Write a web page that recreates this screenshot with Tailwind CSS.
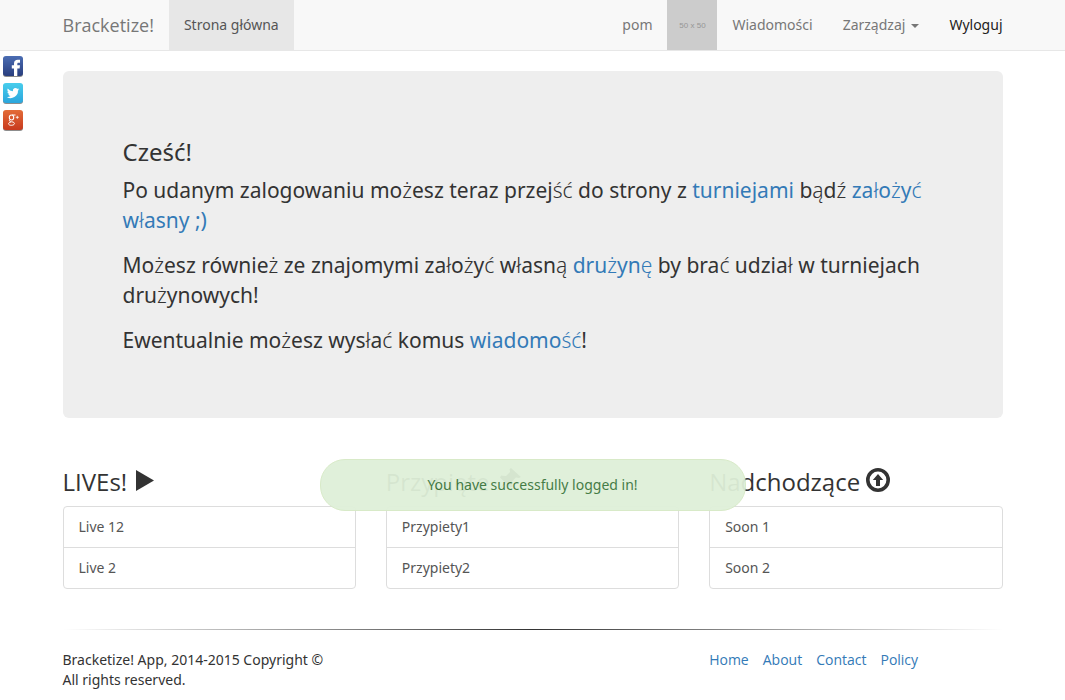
<!DOCTYPE html>
<html lang="pl">
<head>
<meta charset="utf-8">
<meta name="viewport" content="width=device-width, initial-scale=1">
<title>Bracketize!</title>
<script src="https://cdn.jsdelivr.net/npm/@tailwindcss/browser@4"></script>
</head>
<body class="bg-white font-['Noto_Sans','Open_Sans',sans-serif] text-[14px] leading-5 text-[#333]">
<nav class="mb-5 border-b border-[#e7e7e7] bg-[#f8f8f8] text-[#777]">
  <div class="mx-auto flex max-w-[970px] flex-wrap items-stretch justify-between px-[15px]">
    <div class="flex">
      <a href="#" class="py-[15px] pr-[15px] font-['Open_Sans',sans-serif] text-[18px]">Bracketize!</a>
      <a href="#" class="bg-[#e7e7e7] p-[15px] text-[#555]">Strona główna</a>
    </div>
    <div class="flex">
      <a href="#" class="p-[15px]">pom</a>
      <a href="#" class="flex w-[50px] items-center justify-center bg-[#ccc] pt-0.5 font-['Liberation_Sans_Narrow','Liberation_Sans',sans-serif] text-[8px] text-[#969696]">50 x 50</a>
      <a href="#" class="p-[15px]">Wiadomości</a>
      <button type="button" class="flex items-center gap-1.5 p-[15px]">Zarządzaj<span class="mt-0.5 border-x-4 border-t-4 border-x-transparent border-t-[#777]"></span></button>
      <a href="#" class="py-[15px] pl-[15px] text-[#222]">Wyloguj</a>
    </div>
  </div>
</nav>

<aside class="fixed top-14 left-[3px] flex flex-col gap-1.5">
  <a href="#" aria-label="Facebook"><svg class="block" width="20" height="21" viewBox="0 0 20 21"><defs><linearGradient id="fb" x2="0" y2="1"><stop stop-color="#4b6db3"/><stop offset="1" stop-color="#293e7e"/></linearGradient></defs><rect y="1" width="20" height="20" rx="3" fill="#8d8d8d"/><rect width="20" height="20" rx="3" fill="url(#fb)"/><path d="M11 20v-7.600H8.800V9.300H11V7.500C11 5 12.500 3.800 14.700 3.800H17v3h-1.400c-1 0-1.300.4-1.300 1.300v1.200H17l-.4 3.100h-2.300V20z" fill="#fff"/></svg></a>
  <a href="#" aria-label="Twitter"><svg class="block" width="20" height="21" viewBox="0 0 20 21"><defs><linearGradient id="tw" x2="0" y2="1"><stop stop-color="#48cdec"/><stop offset="1" stop-color="#2ba6dd"/></linearGradient></defs><rect y="1" width="20" height="20" rx="3" fill="#8d8d8d"/><rect width="20" height="20" rx="3" fill="url(#tw)"/><path transform="translate(3.800 3.800) scale(.52)" d="M24 4.600a10 10 0 0 1-2.800.8 5 5 0 0 0 2.100-2.700 10 10 0 0 1-3.100 1.200 4.900 4.900 0 0 0-8.400 4.500A14 14 0 0 1 1.700 3.200a4.900 4.900 0 0 0 1.500 6.500 5 5 0 0 1-2.200-.6 4.900 4.900 0 0 0 3.900 4.900 5 5 0 0 1-2.200.1 4.900 4.900 0 0 0 4.600 3.400A10 10 0 0 1 0 19.500a14 14 0 0 0 21.500-12.400A10 10 0 0 0 24 4.600z" fill="#fff"/></svg></a>
  <a href="#" aria-label="Google+"><svg class="block" width="20" height="21" viewBox="0 0 20 21"><defs><linearGradient id="gp" x2="0" y2="1"><stop stop-color="#e36c38"/><stop offset="1" stop-color="#c83a1e"/></linearGradient></defs><rect y="1" width="20" height="20" rx="3" fill="#8d8d8d"/><rect width="20" height="20" rx="3" fill="url(#gp)"/><g fill="none" stroke="#fff"><ellipse cx="8.500" cy="7.500" rx="2.200" ry="2.500" stroke-width="1.100"/><path d="M9 5h3.500M7 10c-1.600 1 .2 1.600 1.800 1.800 2 .3 2.800 1 2.600 2-.5 2-5.800 2-5.800 0 0-1 1-1.600 2.600-1.800" stroke-width="1"/><path d="M14.300 5.800v3M12.800 7.300h3" stroke-width=".8"/></g></svg></a>
</aside>

<div class="mx-auto max-w-[970px] px-[15px]">
  <main>
    <section class="mb-[30px] rounded-md bg-[#eee] px-[60px] py-12 text-[21px] leading-[30px]">
      <h3 class="mt-5 mb-2.5 text-[24px] leading-[26px]">Cześć!</h3>
      <p class="mb-[15px]">Po udanym zalogowaniu mo<span class="font-light">ż</span>esz teraz przej<span class="font-light">ść</span> do strony z <a href="#" class="text-[#337ab7]">turniejami</a> b<span class="font-light">ą</span>d<span class="font-light">ź</span> <a href="#" class="text-[#337ab7]">za<span class="font-light">ł</span>o<span class="font-light">ż</span>y<span class="font-light">ć</span> w<span class="font-light">ł</span>asny ;)</a></p>
      <p class="mb-[15px]">Mo<span class="font-light">ż</span>esz równie<span class="font-light">ż</span> ze znajomymi za<span class="font-light">ł</span>o<span class="font-light">ż</span>y<span class="font-light">ć</span> w<span class="font-light">ł</span>asn<span class="font-light">ą</span> <a href="#" class="text-[#337ab7]">dru<span class="font-light">ż</span>yn<span class="font-light">ę</span></a> by bra<span class="font-light">ć</span> udzia<span class="font-light">ł</span> w turniejach dru<span class="font-light">ż</span>ynowych!</p>
      <p class="mb-[15px]">Ewentualnie mo<span class="font-light">ż</span>esz wys<span class="font-light">ł</span>a<span class="font-light">ć</span> komus <a href="#" class="text-[#337ab7]">wiadomo<span class="font-light">ść</span></a>!</p>
    </section>

    <div class="grid grid-cols-3 gap-[30px] pt-5">
      <section>
        <h3 class="mb-2.5 flex h-7 items-center gap-2 font-['Open_Sans',sans-serif] text-[24px]">LIVEs!
          <svg width="24" height="24" viewBox="0 0 24 24" aria-hidden="true"><path d="M1 0l18 10.500L1 21z" fill="#333"/></svg></h3>
        <div class="divide-y divide-[#ddd] rounded border border-[#ddd] text-[#555]">
          <a href="#" class="block px-[15px] py-2.5">Live 12</a>
          <a href="#" class="block px-[15px] py-2.5">Live 2</a>
        </div>
      </section>
      <section>
        <h3 class="mb-2.5 flex h-7 items-center gap-2 font-['Open_Sans',sans-serif] text-[24px]">Przypięte
          <svg class="mb-1" width="24" height="24" viewBox="0 0 24 24" aria-hidden="true"><path d="M13 0l10 9-2 1-3-.5-4 4 .5 5-2 1-4.500-4.500L1 22l5.500-8L2 9.500l1-2 5 .5 4-4-.5-3z" fill="#333"/></svg></h3>
        <div class="divide-y divide-[#ddd] rounded border border-[#ddd] text-[#555]">
          <a href="#" class="block px-[15px] py-2.5">Przypiety1</a>
          <a href="#" class="block px-[15px] py-2.5">Przypiety2</a>
        </div>
      </section>
      <section>
        <h3 class="mb-2.5 flex h-7 items-center gap-1.5 font-['Open_Sans',sans-serif] text-[24px]">Nadchodzące
          <svg class="mb-1" width="24" height="24" viewBox="0 0 24 24" aria-hidden="true"><circle cx="12" cy="12" r="10.200" fill="none" stroke="#333" stroke-width="3.600"/><path d="M12 6l5.200 6H14v6h-4v-6H6.800z" fill="#333"/></svg></h3>
        <div class="divide-y divide-[#ddd] rounded border border-[#ddd] text-[#555]">
          <a href="#" class="block px-[15px] py-2.5">Soon 1</a>
          <a href="#" class="block px-[15px] py-2.5">Soon 2</a>
        </div>
      </section>
    </div>
  </main>

  <hr class="mt-10 mb-5 h-px border-0 bg-linear-to-r/srgb from-transparent via-[#333] to-transparent">
  <footer class="grid grid-cols-3 gap-[30px]">
    <p class="col-span-2">Bracketize! App, 2014-2015 Copyright ©<br>All rights reserved.</p>
    <div class="flex gap-3.5 font-['Open_Sans',sans-serif] text-[#337ab7]"><a href="#">Home</a><a href="#">About</a><a href="#">Contact</a><a href="#">Policy</a></div>
  </footer>
</div>

<div role="alert" class="fixed bottom-[27%] left-[30%] w-2/5 rounded-[25px] border border-[#d6e9c6] bg-[#dff0d8] p-[15px] text-center text-[#3c763d] opacity-95">You have successfully logged in!</div>
</body>
</html>
